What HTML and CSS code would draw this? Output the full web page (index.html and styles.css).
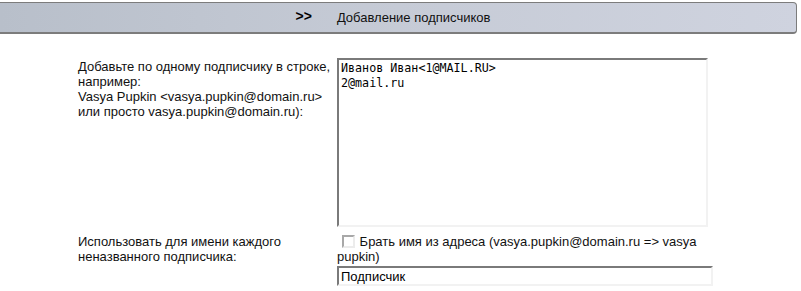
FILE: index.html
```html
<!DOCTYPE html>
<html lang="ru">
<head>
    <meta charset="UTF-8">
    <title>Добавление подписчиков</title>
    <link rel="stylesheet" href="styles.css">
</head>
<body>
    <div class="title-bar">
        <span class="arrows">&gt;&gt;</span>
        <span class="title">Добавление подписчиков</span>
    </div>

    <div class="form-grid">
        <label class="form-label" for="subscribers">
            Добавьте по одному подписчику в строке, например:<br>
            Vasya Pupkin &lt;vasya.pupkin@domain.ru&gt;<br>
            или просто vasya.pupkin@domain.ru):
        </label>
        <div class="form-field">
            <textarea id="subscribers" class="subscribers">Иванов Иван&lt;1@MAIL.RU&gt;
2@mail.ru</textarea>
        </div>

        <label class="form-label" for="defaultName">
            Использовать для имени каждого неназванного подписчика:
        </label>
        <div class="form-field">
            <label class="check-line">
                <input type="checkbox" class="check">
                Брать имя из адреса (vasya.pupkin@domain.ru =&gt; vasya pupkin)
            </label>
            <input type="text" id="defaultName" class="text-input" value="Подписчик">
        </div>
    </div>
</body>
</html>
```

FILE: styles.css
```css
body {
    margin: 0;
    font-family: 'Liberation Sans', Arial, sans-serif;
    font-size: 13px;
    color: #111;
    background-color: #fff;
}

.title-bar {
    display: flex;
    justify-content: center;
    align-items: center;
    gap: 25px;
    height: 29px;
    margin: 2px 4px 0 0;
    padding-right: 10px;
    border: 1px solid #7c7c7c;
    border-left: none;
    border-bottom-width: 2px;
    border-radius: 0 4px 4px 0;
    background: linear-gradient(to right, #b8bfca, #c6cbd6 50%, #cfd3df);
}

.title-bar .arrows {
    font-weight: bold;
    font-size: 14px;
    color: #000;
    margin-top: -4px;
}

.title-bar .title {
    font-size: 13px;
    color: #111;
}

.form-grid {
    display: grid;
    grid-template-columns: 259px 376px;
    row-gap: 6px;
    padding: 24px 0 0 78px;
    line-height: 15px;
}

.form-label {
    padding-top: 1px;
    padding-right: 4px;
}

.subscribers {
    display: block;
    box-sizing: border-box;
    width: 371px;
    height: 169px;
    margin: 0;
    padding: 1px 2px;
    border: 2px solid;
    border-color: #7a7a7a #f2f2f2 #f2f2f2 #7a7a7a;
    font-family: 'DejaVu Sans Mono', 'Liberation Mono', monospace;
    font-size: 11.7px;
    line-height: 15px;
    color: #000;
    resize: none;
    outline: none;
}

.check-line {
    display: block;
    padding-top: 1px;
}

.check {
    appearance: none;
    -webkit-appearance: none;
    box-sizing: border-box;
    width: 13px;
    height: 13px;
    margin: 0 1px 0 5px;
    vertical-align: -2px;
    border: 2px solid;
    border-color: #a8a8a8 #ececec #ececec #a8a8a8;
    background-color: #fff;
}

.text-input {
    display: block;
    box-sizing: border-box;
    width: 376px;
    height: 20px;
    margin: 2px 0 0;
    padding: 0 2px;
    border: 2px solid;
    border-color: #7a7a7a #f2f2f2 #f2f2f2 #7a7a7a;
    font-family: 'Liberation Sans', Arial, sans-serif;
    font-size: 13px;
    color: #000;
    outline: none;
}
```
